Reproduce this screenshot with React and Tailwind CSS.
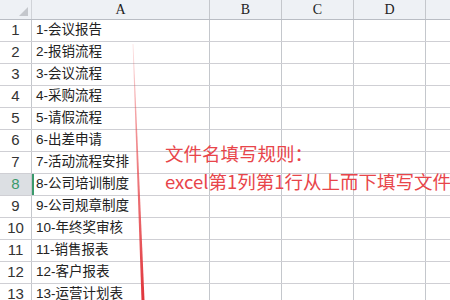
import React from "react";

const items = [
  "1-会议报告",
  "2-报销流程",
  "3-会议流程",
  "4-采购流程",
  "5-请假流程",
  "6-出差申请",
  "7-活动流程安排",
  "8-公司培训制度",
  "9-公司规章制度",
  "10-年终奖审核",
  "11-销售报表",
  "12-客户报表",
  "13-运营计划表",
];

const cjk = { fontFamily: '"Liberation Sans", "Noto Sans CJK SC", sans-serif' };
const serif = { fontFamily: '"Liberation Serif", "Noto Sans CJK SC", serif' };

export default function App() {
  return (
    <div className="relative w-[450px] h-[300px] overflow-hidden bg-white">
      {/* header */}
      <div className="flex h-[20px] bg-[#eef1f5] border-b border-[#b9bdc4]">
        <div className="w-[32px] shrink-0 border-r border-[#d0d3d8] flex items-end justify-end pr-[3px] pb-[3px]">
          <div className="w-0 h-0 border-l-[9px] border-l-transparent border-b-[9px] border-b-[#c4c7cc]" />
        </div>
        <div className="w-[178px] shrink-0 border-r border-[#c4c7cc] flex items-center justify-center text-[14px] text-[#222]" style={serif}>A</div>
        <div className="w-[72px] shrink-0 border-r border-[#c4c7cc] flex items-center justify-center text-[14px] text-[#222]" style={serif}>B</div>
        <div className="w-[72px] shrink-0 border-r border-[#c4c7cc] flex items-center justify-center text-[14px] text-[#222]" style={serif}>C</div>
        <div className="w-[72px] shrink-0 border-r border-[#c4c7cc] flex items-center justify-center text-[14px] text-[#222]" style={serif}>D</div>
        <div className="flex-1" />
      </div>
      {items.map((t, i) => {
        const sel = i === 7;
        return (
          <div key={i} className="flex h-[22px] border-b border-[#cfcfd4]">
            <div
              className={
                "w-[32px] shrink-0 border-r border-[#c4c7cc] flex items-center justify-center text-[15px] " +
                (sel ? "bg-[#dcdfe3] text-[#3a9a6c]" : "bg-white text-[#333]")
              }
              style={cjk}
            >
              {i + 1}
            </div>
            <div
              className={
                "w-[178px] shrink-0 border-r border-[#c4c7cc] flex items-center text-[13.5px] text-[#222] " +
                (sel ? "border-l-2 border-l-[#3a9a6c] pl-[2px]" : "pl-[4px]")
              }
              style={cjk}
            >
              {t}
            </div>
            <div className="w-[72px] shrink-0 border-r border-[#c4c7cc]" />
            <div className="w-[72px] shrink-0 border-r border-[#c4c7cc]" />
            <div className="w-[72px] shrink-0 border-r border-[#c4c7cc]" />
            <div className="flex-1" />
          </div>
        );
      })}

      {/* red annotation text */}
      <div
        className="absolute left-[165px] top-[139px] text-[18.5px] leading-[28px] text-[#e8454a] whitespace-nowrap"
        style={{ fontFamily: '"Noto Sans CJK SC", "Noto Sans", sans-serif' }}
      >
        <div>文件名填写规则：</div>
        <div>excel第1列第1行从上而下填写文件</div>
      </div>

      {/* red line */}
      <svg className="absolute left-0 top-0 pointer-events-none" width="450" height="300">
        <defs>
          <linearGradient id="rl" x1="0" y1="0" x2="0" y2="1">
            <stop offset="0" stopColor="#e8454a" stopOpacity="0.15" />
            <stop offset="0.35" stopColor="#e8454a" stopOpacity="0.6" />
            <stop offset="1" stopColor="#e0353b" stopOpacity="1" />
          </linearGradient>
        </defs>
        <polygon points="132.6,44 133.4,44 144.5,300 141.5,300" fill="url(#rl)" />
      </svg>
    </div>
  );
}
